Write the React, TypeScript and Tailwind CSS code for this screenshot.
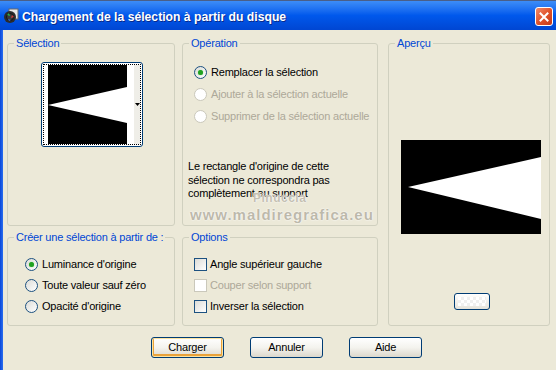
import React from "react";
import clsx from "clsx";

// XP-style radio button
function Radio({ checked, disabled }: { checked?: boolean; disabled?: boolean }) {
  return (
    <span
      className={clsx(
        "w-[13px] h-[13px] rounded-full border flex items-center justify-center shrink-0",
        disabled
          ? "border-[#CAC8BB] bg-white"
          : "border-[#1C5180] bg-gradient-to-br from-[#DCDCD7] to-white"
      )}
    >
      {checked && <span className="w-[5px] h-[5px] rounded-full bg-[#21A121] shadow-[0_0_1px_#5FD35F]" />}
    </span>
  );
}

function Check({ disabled }: { disabled?: boolean }) {
  return (
    <span
      className={clsx(
        "w-[13px] h-[13px] border shrink-0",
        disabled
          ? "border-[#CAC8BB] bg-white"
          : "border-[#1C5180] bg-gradient-to-br from-[#DCDCD7] to-white"
      )}
    />
  );
}

function Group({
  label,
  className,
  children,
}: {
  label: string;
  className?: string;
  children?: React.ReactNode;
}) {
  return (
    <fieldset className={clsx("border border-[#D0D0BF] rounded-[3px] min-w-0", className)}>
      <legend className="ml-[6px] px-[2px] leading-[13px] text-[#0046D5]">{label}</legend>
      {children}
    </fieldset>
  );
}

function XpButton({ label, def }: { label: string; def?: boolean }) {
  return (
    <button
      className={clsx(
        "w-[73px] h-[21px] border border-[#003C74] rounded-[3px] bg-gradient-to-b from-white via-[#F4F3EE] to-[#DCD8CC] text-black leading-none",
        def && "shadow-[inset_0_0_0_1px_#FCE3A0,inset_0_-1px_0_2px_#E9A23A]"
      )}
    >
      {label}
    </button>
  );
}

// white wedge on black, used for both thumbnail and preview
function Wedge({ w, h, pts }: { w: number; h: number; pts: string }) {
  return (
    <svg width={w} height={h} viewBox={`0 0 ${w} ${h}`} className="block shrink-0">
      <rect width={w} height={h} fill="#000" />
      <polygon points={pts} fill="#fff" />
    </svg>
  );
}

function TitleIcon() {
  return (
    <svg width="16" height="16" viewBox="0 0 16 16" className="shrink-0">
      <rect x="6" y="1" width="9" height="10" fill="#e8e8e8" stroke="#6a6a6a" strokeWidth="1" />
      <circle cx="7" cy="9" r="6" fill="#2b2b2b" />
      <circle cx="7" cy="9" r="3.5" fill="#3a3a3a" stroke="#151515" />
      <path d="M4 7 L6 5 L7 8 Z" fill="#2fb34a" />
      <path d="M9 7 L11 9 L8 10 Z" fill="#d23a3a" />
      <path d="M5 11 L8 12 L6 13 Z" fill="#3a72e0" />
    </svg>
  );
}

export default function App() {
  return (
    <div className="w-[556px] h-[370px] flex flex-col overflow-hidden font-['Liberation_Sans',Arial,sans-serif] text-[11px] tracking-[-0.2px] text-black">
      {/* Title bar */}
      <div className="h-[30px] shrink-0 flex items-center pl-[3px] border-t border-[#4a5f88] bg-gradient-to-b from-[#3D8DF7] via-[#0058EC] to-[#0046D2]">
        <TitleIcon />
        <span className="ml-[3px] pt-[3px] text-white font-bold text-[12.2px] tracking-normal [text-shadow:1px_1px_0_#0a2a8a]">
          Chargement de la sélection à partir du disque
        </span>
        <span className="ml-auto mr-[3px] mt-[2px] w-[18px] h-[19px] rounded-[3px] border border-white bg-gradient-to-br from-[#F08A6A] via-[#E1532B] to-[#C2391A] flex items-center justify-center">
          <svg width="10" height="10" viewBox="0 0 10 10">
            <path d="M1.5 1.5 L8.5 8.5 M8.5 1.5 L1.5 8.5" stroke="#fff" strokeWidth="2" strokeLinecap="square" />
          </svg>
        </span>
      </div>

      {/* Body */}
      <div className="flex-1 flex">
        <div className="w-[3px] bg-gradient-to-r from-[#0A46D8] to-[#2A6EF0]" />
        <div className="flex-1 bg-[#ECE9D8] flex flex-col pt-[7px]">
          <div className="pl-[4px] grid grid-cols-[168px_196px_165px] grid-rows-[189px_95px] gap-x-[7px] gap-y-[5px]">
            <Group label="Sélection">
              <div className="ml-[33px] mt-[12px] w-[102px] h-[85px] border border-[#003C74] rounded-[3px] bg-white p-[1px]">
                <div className="h-full border border-dotted border-black flex items-center">
                  <div className="pl-[4px]">
                    <Wedge w={79} h={79} pts="0,40 79,22 79,58" />
                  </div>
                  <div className="w-[7px] h-[79px] bg-white" />
                  <div className="flex-1 h-[79px] bg-[#EFEEE8] flex items-center justify-center">
                    <svg width="5" height="3" viewBox="0 0 5 3">
                      <polygon points="0,0 5,0 2.5,3" fill="#000" />
                    </svg>
                  </div>
                </div>
              </div>
            </Group>

            <Group label="Opération" className="relative">
              <div className="mt-[11px] pl-[11px] flex flex-col">
                <label className="h-[22px] flex items-center gap-[4px]">
                  <Radio checked />
                  <span>Remplacer la sélection</span>
                </label>
                <label className="h-[22px] flex items-center gap-[4px] text-[#ACA899]">
                  <Radio disabled />
                  <span>Ajouter à la sélection actuelle</span>
                </label>
                <label className="h-[22px] flex items-center gap-[4px] text-[#ACA899]">
                  <Radio disabled />
                  <span>Supprimer de la sélection actuelle</span>
                </label>
              </div>
              <p className="mt-[33px] pl-[5px] leading-[13.5px]">
                Le rectangle d'origine de cette
                <br />
                sélection ne correspondra pas
                <br />
                complètement au support
              </p>
              {/* watermark */}
              <span className="absolute left-[70px] top-[139px] text-[12px] font-bold tracking-[0.5px] text-[#C4C0B2] [text-shadow:0_0_2px_#fff,0_0_1px_#fff]">
                Pinuccia
              </span>
              <span className="absolute left-[7px] top-[157px] text-[15px] leading-[16px] font-bold tracking-[1px] text-[#BDB9AB] [text-shadow:0_0_2px_#fff,0_0_1px_#fff]">
                www.maldiregrafica.eu
              </span>
            </Group>

            <Group label="Aperçu" className="row-span-2 ml-[3px] w-[162px]">
              <div className="mt-[90px] pl-[12px]">
                <Wedge w={140} h={94} pts="7,47 140,17 140,79" />
              </div>
              <div className="mt-[59px] ml-[65px] w-[36px] h-[17px] border border-[#003C74] rounded-[3px] bg-gradient-to-b from-white to-[#E6E3DA] p-[3px]">
                <div className="h-full bg-[repeating-conic-gradient(#F0F0F0_0_25%,#FFFFFF_0_50%)] bg-[length:6px_6px]" />
              </div>
            </Group>

            <Group label="Créer une sélection à partir de :">
              <div className="mt-[10px] pl-[17px] flex flex-col">
                <label className="h-[21px] flex items-center gap-[4px]">
                  <Radio checked />
                  <span>Luminance d'origine</span>
                </label>
                <label className="h-[21px] flex items-center gap-[4px]">
                  <Radio />
                  <span>Toute valeur sauf zéro</span>
                </label>
                <label className="h-[21px] flex items-center gap-[4px]">
                  <Radio />
                  <span>Opacité d'origine</span>
                </label>
              </div>
            </Group>

            <Group label="Options">
              <div className="mt-[10px] pl-[11px] flex flex-col">
                <label className="h-[21px] flex items-center gap-[3px]">
                  <Check />
                  <span>Angle supérieur gauche</span>
                </label>
                <label className="h-[21px] flex items-center gap-[3px] text-[#ACA899]">
                  <Check disabled />
                  <span>Couper selon support</span>
                </label>
                <label className="h-[21px] flex items-center gap-[3px]">
                  <Check />
                  <span>Inverser la sélection</span>
                </label>
              </div>
            </Group>
          </div>

          <div className="mt-[11px] pl-[148px] flex gap-[26px]">
            <XpButton label="Charger" def />
            <XpButton label="Annuler" />
            <XpButton label="Aide" />
          </div>
        </div>
      </div>
    </div>
  );
}
